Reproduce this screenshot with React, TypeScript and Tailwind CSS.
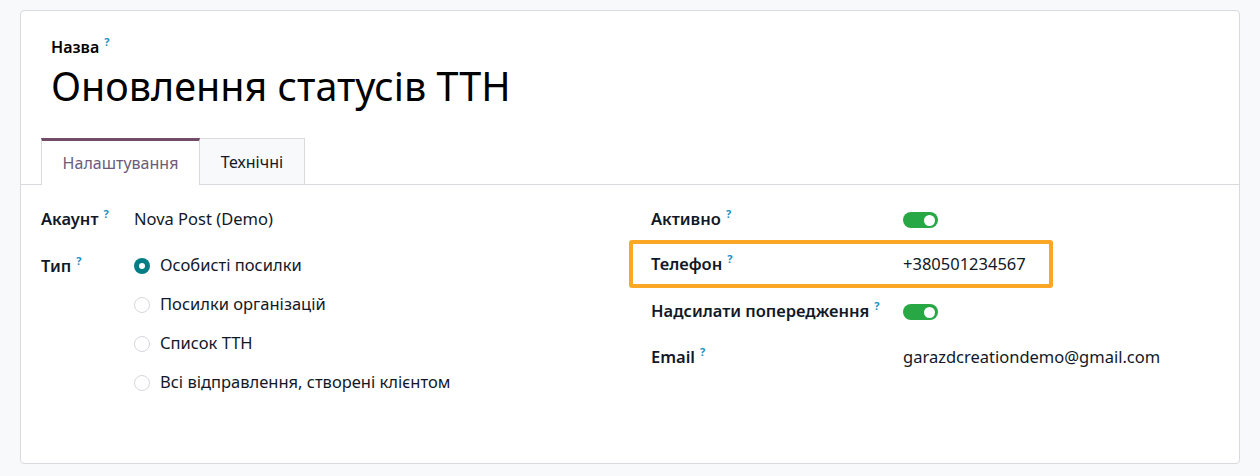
import React from 'react';

const font = { fontFamily: '"Noto Sans", "Open Sans", sans-serif' };

function Help() {
  return <span className="relative -top-[7px] ml-[5px] text-[11px] font-bold text-[#1f8fbf]">?</span>;
}

function Toggle() {
  return (
    <span className="inline-flex h-[16px] w-[35px] items-center justify-end rounded-full bg-[#28a745] pr-[3px]">
      <span className="h-[11px] w-[11px] rounded-full bg-white" />
    </span>
  );
}

function Radio({ checked, label }: { checked?: boolean; label: string }) {
  return (
    <div className="flex h-[39px] items-center gap-[10px]">
      {checked ? (
        <span className="flex h-[16px] w-[16px] items-center justify-center rounded-full bg-[#017e84]">
          <span className="h-[6px] w-[6px] rounded-full bg-white" />
        </span>
      ) : (
        <span className="h-[16px] w-[16px] rounded-full border border-[#d5d8dc] bg-white" />
      )}
      <span>{label}</span>
    </div>
  );
}

function Row({ label, children }: { label: string; children: React.ReactNode }) {
  return (
    <div className="flex h-[46px] items-center">
      <div className="w-[252px] font-semibold">
        {label}
        <Help />
      </div>
      <div>{children}</div>
    </div>
  );
}

export default function App() {
  const types = ['Особисті посилки', 'Посилки організацій', 'Список ТТН', 'Всі відправлення, створені клієнтом'];

  return (
    <div className="h-[476px] w-[1260px] bg-[#f8f9fa] px-[20px] pt-[10px]" style={font}>
      <div className="h-[454px] rounded-[4px] border border-[#d8dadd] bg-white text-[16.5px] text-[#111827]">
        {/* Title */}
        <div className="px-[30px] pt-[26px]">
          <div className="text-[16px] font-semibold leading-[20px] text-black">
            Назва
            <Help />
          </div>
          <h1 className="mt-[4px] text-[39.5px] leading-[46px] text-black">Оновлення статусів ТТН</h1>
        </div>

        {/* Tabs */}
        <div className="mt-[29px] flex border-b border-[#d8dadd] pl-[20px]">
          <div className="-mb-px flex h-[47px] w-[159px] items-center justify-center border-x border-t-[3px] border-x-[#d8dadd] border-t-[#714b67] bg-white text-[16px] text-[#6d5b79]">
            Налаштування
          </div>
          <div className="flex h-[46px] w-[105px] items-center justify-center border-r border-t border-[#d8dadd] bg-[#f8f9fa] text-[16px] text-[#111827]">
            Технічні
          </div>
        </div>

        {/* Fields */}
        <div className="grid grid-cols-2 pl-[20px] pt-[11px]">
          <div>
            <div className="flex h-[46px] items-center">
              <div className="w-[93px] font-semibold">
                Акаунт
                <Help />
              </div>
              <div>Nova Post (Demo)</div>
            </div>
            <div className="flex pt-[4px]">
              <div className="w-[93px] pt-[8px] font-semibold">
                Тип
                <Help />
              </div>
              <div>
                {types.map((t, i) => (
                  <Radio key={t} label={t} checked={i === 0} />
                ))}
              </div>
            </div>
          </div>

          <div className="pl-[11px]">
            <Row label="Активно">
              <span className="flex pt-[2px]">
                <Toggle />
              </span>
            </Row>
            <div className="-ml-[22px] -mt-[2px] flex h-[48px] w-[424px] items-center rounded-[3px] border-[4px] border-[#fba726] pl-[18px]">
              <div className="w-[252px] font-semibold">
                Телефон
                <Help />
              </div>
              <div>+380501234567</div>
            </div>
            <Row label="Надсилати попередження">
              <span className="flex pt-[2px]">
                <Toggle />
              </span>
            </Row>
            <Row label="Email">garazdcreationdemo@gmail.com</Row>
          </div>
        </div>
      </div>
    </div>
  );
}
